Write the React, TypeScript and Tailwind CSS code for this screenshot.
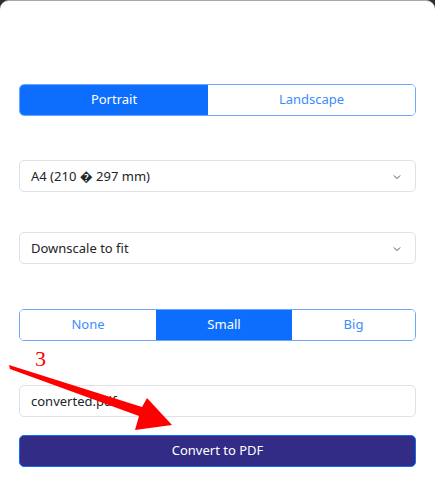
import React from 'react'

const font = { fontFamily: '"Noto Sans", "Open Sans", sans-serif' }

// widths taken from the reference, last segment fills the rest
function Segmented({ items, active, widths }: { items: string[]; active: number; widths: string[] }) {
  return (
    <div className="flex h-[32px] w-full overflow-hidden rounded-[5px] border border-[#6ea8fe]">
      {items.map((it, i) => (
        <div
          key={it}
          className={
            (i === active
              ? 'flex items-center justify-center bg-[#0d6efd] text-[13px] text-white '
              : 'flex items-center justify-center bg-white text-[13px] text-[#3d8bfd] ') + widths[i]
          }
        >
          {it}
        </div>
      ))}
    </div>
  )
}

function Select({ value }: { value: string }) {
  return (
    <div className="flex h-[32px] w-full items-center justify-between rounded-[5px] border border-[#dee2e6] bg-white pl-[11px] pr-[13px] pt-[1px] text-[13px] text-[#212529]">
      <span>{value}</span>
      <svg width="10" height="10" viewBox="0 0 16 16" fill="none" stroke="#495057" strokeWidth="1.6" strokeLinecap="round" strokeLinejoin="round">
        <path d="M3.5 6l4.5 4.5L12.5 6" />
      </svg>
    </div>
  )
}

export default function App() {
  return (
    <div className="h-[488px] w-[435px] bg-[#2d2d33]" style={font}>
      <div className="relative h-full w-full rounded-t-[9px] border-t border-[#a9a9ad] bg-white px-[19px] pt-[83px]">
        <Segmented items={['Portrait', 'Landscape']} active={0} widths={['w-[188px]', 'flex-1']} />
        <div className="mt-[44px]">
          <Select value="A4 (210 � 297 mm)" />
        </div>
        <div className="mt-[40px]">
          <Select value="Downscale to fit" />
        </div>
        <div className="mt-[45px]">
          <Segmented items={['None', 'Small', 'Big']} active={1} widths={['w-[136px]', 'w-[136px]', 'flex-1']} />
        </div>
        <div className="mt-[44px] flex h-[32px] w-full items-center rounded-[5px] border border-[#dee2e6] bg-white pl-[11px] pt-[1px] text-[13px] text-[#212529]">
          converted.pdf
        </div>
        <button className="mt-[18px] flex h-[32px] w-full items-center justify-center rounded-[5px] border border-[#0d6efd] bg-[#332c86] text-[13px] text-white">
          Convert to PDF
        </button>

        <span
          className="absolute left-[35px] top-[347px] text-[22px] leading-none text-[#ff0000]"
          style={{ fontFamily: '"Liberation Serif", serif' }}
        >
          3
        </span>
        <svg className="absolute left-0 top-0" width="435" height="488" viewBox="0 0 435 488">
          <polygon
            points="9,364 142,406 147,397 172,424 135,429 139,415 10,368"
            fill="#ff0000"
          />
        </svg>
      </div>
    </div>
  )
}
